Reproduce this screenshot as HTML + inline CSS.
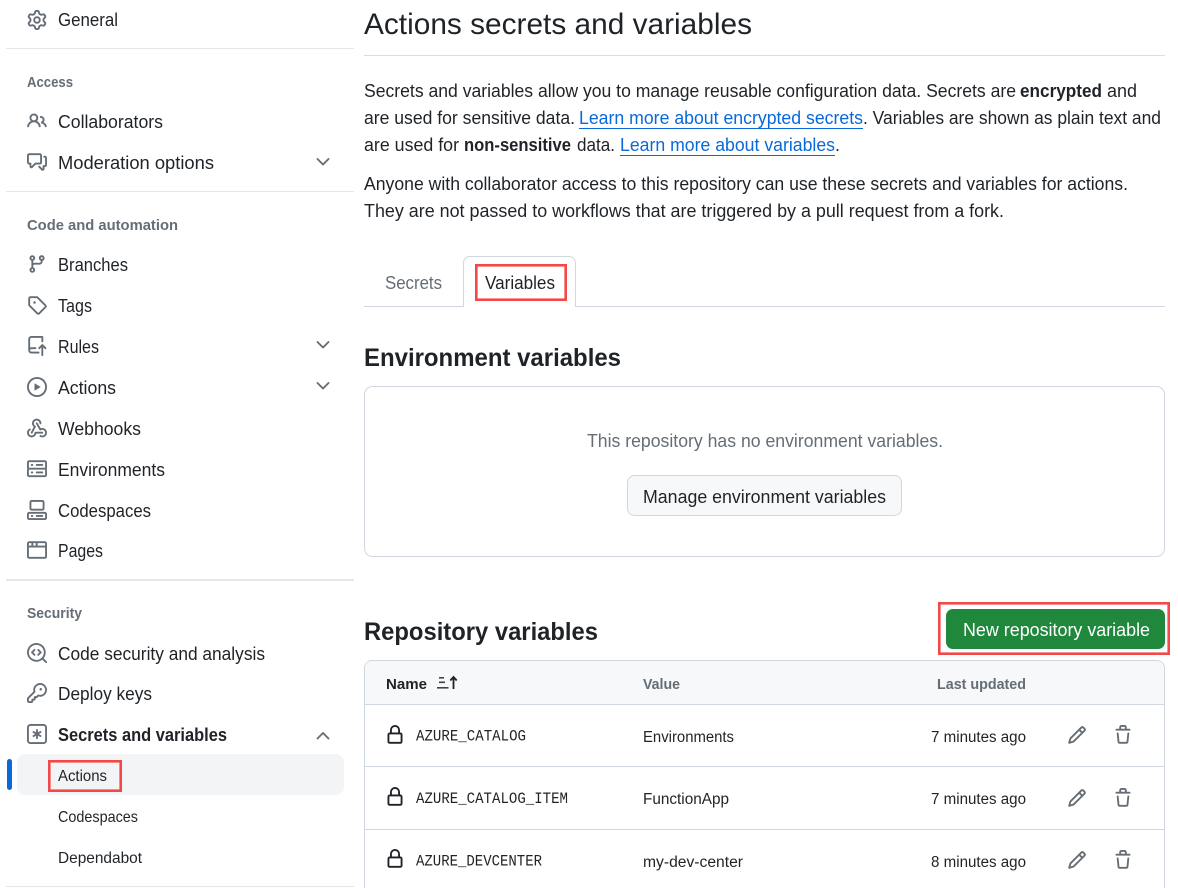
<!DOCTYPE html>
<html lang="en">
<head>
<meta charset="utf-8">
<title>Actions secrets and variables</title>
<style>
html,body{margin:0;padding:0;background:#fff;width:1178px;height:888px;overflow:hidden}
svg{display:block}
text{font-family:"Liberation Sans",sans-serif;fill:#1f2328;font-size:18px}
.b{font-weight:700}
.h{font-weight:700;font-size:15px;fill:#656d76}
.s{font-size:16px}
.g{fill:#656d76}
.l{fill:#0969da}
.m{font-family:"Liberation Mono",monospace;font-size:15.5px}
.t{font-size:15.5px}
.i{fill:#656d76}
.c{fill:none;stroke:#656d76;stroke-width:1.9;stroke-linecap:round;stroke-linejoin:round}
</style>
</head>
<body>
<svg width="1178" height="888" viewBox="0 0 1178 888" xmlns="http://www.w3.org/2000/svg">
<defs>
<path id="gear" d="M8 0a8.2 8.2 0 0 1 .701.031C9.444.095 9.99.645 10.16 1.29l.288 1.107c.018.066.079.158.212.224.231.114.454.243.668.386.123.082.233.09.299.071l1.103-.303c.644-.176 1.392.021 1.82.63.27.385.506.792.704 1.218.315.675.111 1.422-.364 1.891l-.814.806c-.049.048-.098.147-.088.294.016.257.016.515 0 .772-.01.147.038.246.088.294l.814.806c.475.469.679 1.216.364 1.891a7.977 7.977 0 0 1-.704 1.217c-.428.61-1.176.807-1.82.63l-1.102-.302c-.067-.019-.177-.011-.3.071a5.909 5.909 0 0 1-.668.386c-.133.066-.194.158-.211.224l-.29 1.106c-.168.646-.715 1.196-1.458 1.26a8.006 8.006 0 0 1-1.402 0c-.743-.064-1.289-.614-1.458-1.26l-.289-1.106c-.018-.066-.079-.158-.212-.224a5.738 5.738 0 0 1-.668-.386c-.123-.082-.233-.09-.299-.071l-1.103.303c-.644.176-1.392-.021-1.82-.63a8.12 8.12 0 0 1-.704-1.218c-.315-.675-.111-1.422.363-1.891l.815-.806c.05-.048.098-.147.088-.294a6.214 6.214 0 0 1 0-.772c.01-.147-.038-.246-.088-.294l-.815-.806C.635 6.045.431 5.298.746 4.623a7.92 7.92 0 0 1 .704-1.217c.428-.61 1.176-.807 1.82-.63l1.102.302c.067.019.177.011.3-.071.214-.143.437-.272.668-.386.133-.066.194-.158.211-.224l.29-1.106C6.009.645 6.556.095 7.299.03 7.53.01 7.764 0 8 0Zm-.571 1.525c-.036.003-.108.036-.137.146l-.289 1.105c-.147.561-.549.967-.998 1.189-.173.086-.34.183-.5.29-.417.278-.97.423-1.529.27l-1.103-.303c-.109-.03-.175.016-.195.045-.22.312-.412.644-.573.99-.014.031-.021.11.059.19l.815.806c.411.406.562.957.53 1.456a4.709 4.709 0 0 0 0 .582c.032.499-.119 1.05-.53 1.456l-.815.806c-.081.08-.073.159-.059.19.162.346.353.677.573.989.02.03.085.076.195.046l1.102-.303c.56-.153 1.113-.008 1.53.27.161.107.328.204.501.29.447.222.85.629.997 1.189l.289 1.105c.029.109.101.143.137.146a6.6 6.6 0 0 0 1.142 0c.036-.003.108-.036.137-.146l.289-1.105c.147-.561.549-.967.998-1.189.173-.086.34-.183.5-.29.417-.278.97-.423 1.529-.27l1.103.303c.109.029.175-.016.195-.045.22-.313.411-.644.573-.99.014-.031.021-.11-.059-.19l-.815-.806c-.411-.406-.562-.957-.53-1.456a4.709 4.709 0 0 0 0-.582c-.032-.499.119-1.05.53-1.456l.815-.806c.081-.08.073-.159.059-.19a6.464 6.464 0 0 0-.573-.989c-.02-.03-.085-.076-.195-.046l-1.102.303c-.56.153-1.113.008-1.53-.27a4.44 4.44 0 0 0-.501-.29c-.447-.222-.85-.629-.997-1.189l-.289-1.105c-.029-.11-.101-.143-.137-.146a6.6 6.6 0 0 0-1.142 0ZM11 8a3 3 0 1 1-6 0 3 3 0 0 1 6 0ZM9.5 8a1.5 1.5 0 1 0-3.001.001A1.5 1.5 0 0 0 9.5 8Z"/>
<path id="people" d="M2 5.5a3.5 3.5 0 1 1 5.898 2.549 5.508 5.508 0 0 1 3.034 4.084.75.75 0 1 1-1.482.235 4 4 0 0 0-7.9 0 .75.75 0 0 1-1.482-.236A5.507 5.507 0 0 1 3.102 8.05 3.493 3.493 0 0 1 2 5.5ZM11 4a3.001 3.001 0 0 1 2.22 5.018 5.01 5.01 0 0 1 2.56 3.012.749.749 0 0 1-.885.954.752.752 0 0 1-.549-.514 3.507 3.507 0 0 0-2.522-2.372.75.75 0 0 1-.574-.73v-.352a.75.75 0 0 1 .416-.672A1.5 1.5 0 0 0 11 5.5.75.75 0 0 1 11 4Zm-5.5-.5a2 2 0 1 0-.001 3.999A2 2 0 0 0 5.5 3.5Z"/>
<path id="disc" d="M1.75 1h8.5c.966 0 1.75.784 1.75 1.75v5.5A1.75 1.75 0 0 1 10.25 10H7.061l-2.574 2.573A1.458 1.458 0 0 1 2 11.543V10h-.25A1.75 1.75 0 0 1 0 8.25v-5.5C0 1.784.784 1 1.75 1ZM1.5 2.75v5.5c0 .138.112.25.25.25h1a.75.75 0 0 1 .75.75v2.19l2.72-2.72a.749.749 0 0 1 .53-.22h3.5a.25.25 0 0 0 .25-.25v-5.5a.25.25 0 0 0-.25-.25h-8.5a.25.25 0 0 0-.25.25Zm13 2a.25.25 0 0 0-.25-.25h-.5a.75.75 0 0 1 0-1.5h.5c.966 0 1.75.784 1.75 1.75v5.5A1.75 1.75 0 0 1 14.25 12H14v1.543a1.458 1.458 0 0 1-2.487 1.03L9.22 12.28a.749.749 0 0 1 .326-1.275.749.749 0 0 1 .734.215l2.22 2.22v-2.19a.75.75 0 0 1 .75-.75h1a.25.25 0 0 0 .25-.25Z"/>
<path id="branch" d="M9.5 3.25a2.25 2.25 0 1 1 3 2.122V6A2.5 2.5 0 0 1 10 8.5H6a1 1 0 0 0-1 1v1.128a2.251 2.251 0 1 1-1.5 0V5.372a2.25 2.25 0 1 1 1.5 0v1.836A2.493 2.493 0 0 1 6 7h4a1 1 0 0 0 1-1v-.628A2.25 2.25 0 0 1 9.5 3.25Zm-6 0a.75.75 0 1 0 1.5 0 .75.75 0 0 0-1.5 0Zm8.25-.75a.75.75 0 1 0 0 1.5.75.75 0 0 0 0-1.5ZM4.25 12a.75.75 0 1 0 0 1.5.75.75 0 0 0 0-1.5Z"/>
<path id="tag" d="M1 7.775V2.75C1 1.784 1.784 1 2.75 1h5.025c.464 0 .91.184 1.238.513l6.25 6.25a1.75 1.75 0 0 1 0 2.474l-5.026 5.026a1.75 1.75 0 0 1-2.474 0l-6.25-6.25A1.752 1.752 0 0 1 1 7.775Zm1.5 0c0 .066.026.13.073.177l6.25 6.25a.25.25 0 0 0 .354 0l5.025-5.025a.25.25 0 0 0 0-.354l-6.25-6.25a.25.25 0 0 0-.177-.073H2.75a.25.25 0 0 0-.25.25ZM6 5a1 1 0 1 1 0 2 1 1 0 0 1 0-2Z"/>
<path id="push" d="M1 2.5A2.5 2.5 0 0 1 3.5 0h8.75a.75.75 0 0 1 .75.75v3.5a.75.75 0 0 1-1.5 0V1.5h-8a1 1 0 0 0-1 1v6.708A2.493 2.493 0 0 1 3.5 9h3.25a.75.75 0 0 1 0 1.5H3.5a1 1 0 0 0 0 2h5.75a.75.75 0 0 1 0 1.5H3.5A2.5 2.5 0 0 1 1 11.5Zm13.23 7.79h-.001l-1.224-1.224v6.184a.75.75 0 0 1-1.5 0V9.066L10.28 10.29a.75.75 0 0 1-1.06-1.061l2.505-2.504a.75.75 0 0 1 1.06 0L15.29 9.23a.751.751 0 0 1-.018 1.042.751.751 0 0 1-1.042.018Z"/>
<path id="play" d="M8 0a8 8 0 1 1 0 16A8 8 0 0 1 8 0ZM1.5 8a6.5 6.5 0 1 0 13 0 6.5 6.5 0 0 0-13 0Zm4.879-2.773 4.264 2.559a.25.25 0 0 1 0 .428l-4.264 2.559A.25.25 0 0 1 6 10.559V5.442a.25.25 0 0 1 .379-.215Z"/>
<path id="hook" d="M5.5 4.25a2.25 2.25 0 0 1 4.5 0 .75.75 0 0 0 1.5 0 3.75 3.75 0 1 0-6.14 2.889l-2.272 4.258a.75.75 0 0 0 1.324.706L7 7.25a.75.75 0 0 0-.309-1.016A2.25 2.25 0 0 1 5.5 4.25Z M7.364 3.607a.75.75 0 0 1 1.03.257l2.608 4.349a3.75 3.75 0 1 1-.628 6.785.75.75 0 0 1 .752-1.299 2.25 2.25 0 1 0-.033-3.88.75.75 0 0 1-1.03-.256L7.107 4.636a.75.75 0 0 1 .257-1.03Z M2.9 8.776A.75.75 0 0 1 2.625 9.8 2.25 2.25 0 1 0 6 11.75a.75.75 0 0 1 .75-.751h5.5a.75.75 0 0 1 0 1.5H7.425a3.751 3.751 0 1 1-5.55-3.998.75.75 0 0 1 1.024.274Z"/>
<path id="server" d="M1.75 1h12.5c.966 0 1.75.784 1.75 1.75v4c0 .372-.116.717-.314 1 .198.283.314.628.314 1v4a1.75 1.75 0 0 1-1.75 1.75H1.75A1.75 1.75 0 0 1 0 12.75v-4c0-.358.109-.707.314-1a1.739 1.739 0 0 1-.314-1v-4C0 1.784.784 1 1.75 1ZM1.5 2.75v4c0 .138.112.25.25.25h12.5a.25.25 0 0 0 .25-.25v-4a.25.25 0 0 0-.25-.25H1.75a.25.25 0 0 0-.25.25Zm.25 5.75a.25.25 0 0 0-.25.25v4c0 .138.112.25.25.25h12.5a.25.25 0 0 0 .25-.25v-4a.25.25 0 0 0-.25-.25ZM7 4.75A.75.75 0 0 1 7.75 4h4.5a.75.75 0 0 1 0 1.5h-4.5A.75.75 0 0 1 7 4.75ZM7.75 10h4.5a.75.75 0 0 1 0 1.5h-4.5a.75.75 0 0 1 0-1.5ZM3 4.75A.75.75 0 0 1 3.75 4h.5a.75.75 0 0 1 0 1.5h-.5A.75.75 0 0 1 3 4.75ZM3.75 10h.5a.75.75 0 0 1 0 1.5h-.5a.75.75 0 0 1 0-1.5Z"/>
<path id="cs" d="M0 11.25c0-.966.784-1.75 1.75-1.75h12.5c.966 0 1.75.784 1.75 1.75v3A1.75 1.75 0 0 1 14.25 16H1.75A1.75 1.75 0 0 1 0 14.25Zm2-9.5C2 .784 2.784 0 3.75 0h8.5C13.216 0 14 .784 14 1.75v5a1.75 1.75 0 0 1-1.75 1.75h-8.5A1.75 1.75 0 0 1 2 6.75Zm1.75-.25a.25.25 0 0 0-.25.25v5c0 .138.112.25.25.25h8.5a.25.25 0 0 0 .25-.25v-5a.25.25 0 0 0-.25-.25Zm-2 9.5a.25.25 0 0 0-.25.25v3c0 .138.112.25.25.25h12.5a.25.25 0 0 0 .25-.25v-3a.25.25 0 0 0-.25-.25Z M7 12.75a.75.75 0 0 1 .75-.75h4.5a.75.75 0 0 1 0 1.5h-4.5a.75.75 0 0 1-.75-.75Zm-4 0a.75.75 0 0 1 .75-.75h.5a.75.75 0 0 1 0 1.5h-.5a.75.75 0 0 1-.75-.75Z"/>
<path id="browser" d="M0 2.75C0 1.784.784 1 1.75 1h12.5c.966 0 1.75.784 1.75 1.75v10.5A1.75 1.75 0 0 1 14.25 15H1.75A1.75 1.75 0 0 1 0 13.25ZM14.5 6h-13v7.25c0 .138.112.25.25.25h12.5a.25.25 0 0 0 .25-.25Zm-6-3.5v2h6V2.75a.25.25 0 0 0-.25-.25ZM5 2.5v2h2v-2Zm-3.25 0a.25.25 0 0 0-.25.25V4.5h2v-2Z"/>
<path id="scan" d="M8.47 4.97a.75.75 0 0 0 0 1.06L9.94 7.5 8.47 8.97a.75.75 0 1 0 1.06 1.06l2-2a.75.75 0 0 0 0-1.06l-2-2a.75.75 0 0 0-1.06 0ZM6.53 6.03a.75.75 0 0 0-1.06-1.06l-2 2a.75.75 0 0 0 0 1.06l2 2a.75.75 0 1 0 1.06-1.06L5.06 7.5l1.47-1.47Z M12.246 13.307a7.501 7.501 0 1 1 1.06-1.06l2.474 2.473a.749.749 0 0 1-.326 1.275.749.749 0 0 1-.734-.215ZM1.5 7.5a6.002 6.002 0 0 0 3.608 5.504 6.002 6.002 0 0 0 6.486-1.117.748.748 0 0 1 .292-.293A6 6 0 1 0 1.5 7.5Z"/>
<path id="key" d="M10.5 0a5.499 5.499 0 1 1-1.288 10.848l-.932.932a.749.749 0 0 1-.53.22H7v.75a.749.749 0 0 1-.22.53l-.5.5a.749.749 0 0 1-.53.22H5v.75a.749.749 0 0 1-.22.53l-.5.5a.749.749 0 0 1-.53.22h-2A1.75 1.75 0 0 1 0 14.25v-2c0-.199.079-.389.22-.53l4.932-4.932A5.5 5.5 0 0 1 10.5 0Zm-4 5.5c-.001.431.069.86.205 1.269a.75.75 0 0 1-.181.768L1.5 12.56v1.69c0 .138.112.25.25.25h1.69l.06-.06v-1.19a.75.75 0 0 1 .75-.75h1.19l.06-.06v-1.19a.75.75 0 0 1 .75-.75h1.19l1.023-1.025a.75.75 0 0 1 .768-.18A4 4 0 1 0 6.5 5.5ZM11 6a1 1 0 1 1 0-2 1 1 0 0 1 0 2Z"/>
<path id="ast" d="M0 2.75A2.75 2.75 0 0 1 2.75 0h10.5A2.75 2.75 0 0 1 16 2.75v10.5A2.75 2.75 0 0 1 13.25 16H2.75A2.75 2.75 0 0 1 0 13.25ZM2.75 1.5c-.69 0-1.25.56-1.25 1.25v10.5c0 .69.56 1.25 1.25 1.25h10.5c.69 0 1.25-.56 1.25-1.25V2.75c0-.69-.56-1.25-1.25-1.25Z M8 4a.75.75 0 0 1 .75.75V6.7l1.69-.975a.75.75 0 0 1 .75 1.3L9.5 8l1.69.976a.75.75 0 0 1-.75 1.298L8.75 9.3v1.951a.75.75 0 0 1-1.5 0V9.299l-1.69.976a.75.75 0 0 1-.75-1.3L6.5 8l-1.69-.975a.75.75 0 0 1 .75-1.3l1.69.976V4.75A.75.75 0 0 1 8 4Z"/>
<path id="lock" d="M4 4a4 4 0 0 1 8 0v2h.25c.966 0 1.75.784 1.75 1.75v5.5A1.75 1.75 0 0 1 12.25 15h-8.5A1.75 1.75 0 0 1 2 13.25v-5.5C2 6.784 2.784 6 3.75 6H4Zm8.25 3.5h-8.5a.25.25 0 0 0-.25.25v5.5c0 .138.112.25.25.25h8.5a.25.25 0 0 0 .25-.25v-5.5a.25.25 0 0 0-.25-.25ZM10.5 6V4a2.5 2.5 0 1 0-5 0v2Z"/>
<path id="pencil" d="M11.013 1.427a1.75 1.75 0 0 1 2.474 0l1.086 1.086a1.75 1.75 0 0 1 0 2.474l-8.61 8.61c-.21.21-.47.364-.756.445l-3.251.93a.75.75 0 0 1-.927-.928l.929-3.25c.081-.286.235-.547.445-.758l8.61-8.61Zm.176 4.823L9.75 4.81l-6.286 6.287a.253.253 0 0 0-.064.108l-.558 1.953 1.953-.558a.253.253 0 0 0 .108-.064Zm1.238-3.763a.25.25 0 0 0-.354 0L10.811 3.75l1.439 1.44 1.263-1.263a.25.25 0 0 0 0-.354Z"/>
<path id="trash" d="M11 1.75V3h2.25a.75.75 0 0 1 0 1.5H2.75a.75.75 0 0 1 0-1.5H5V1.75C5 .784 5.784 0 6.75 0h2.5C10.216 0 11 .784 11 1.75ZM4.496 6.675l.66 6.6a.25.25 0 0 0 .249.225h5.19a.25.25 0 0 0 .249-.225l.66-6.6a.75.75 0 0 1 1.492.149l-.66 6.6A1.748 1.748 0 0 1 10.595 15h-5.19a1.75 1.75 0 0 1-1.741-1.575l-.66-6.6a.75.75 0 1 1 1.492-.15ZM6.5 1.75V3h3V1.75a.25.25 0 0 0-.25-.25h-2.5a.25.25 0 0 0-.25.25Z"/>
</defs>

<!-- Sidebar -->
<rect x="6" y="48" width="348" height="1" fill="#e4e8ec"/>
<rect x="6" y="191" width="348" height="1" fill="#e4e8ec"/>
<rect x="6" y="579" width="348" height="2" fill="#e4e8ec"/>
<rect x="6" y="886" width="348" height="1" fill="#e4e8ec"/>
<rect x="17" y="754" width="327" height="41" rx="8" fill="#f3f4f6"/>
<rect x="7" y="759" width="5" height="31" rx="2.5" fill="#0969da"/>

<g class="i">
<use href="#gear" transform="translate(27 10) scale(1.25)"/>
<use href="#people" transform="translate(27 111) scale(1.25)"/>
<use href="#disc" transform="translate(27 152) scale(1.25)"/>
<use href="#branch" transform="translate(27 254) scale(1.25)"/>
<use href="#tag" transform="translate(27 295) scale(1.25)"/>
<use href="#push" transform="translate(27 336) scale(1.25)"/>
<use href="#play" transform="translate(27 377) scale(1.25)"/>
<use href="#hook" transform="translate(27 418) scale(1.25)"/>
<use href="#server" transform="translate(27 459) scale(1.25)"/>
<use href="#cs" transform="translate(27 500) scale(1.25)"/>
<use href="#browser" transform="translate(27 540) scale(1.25)"/>
<use href="#scan" transform="translate(27 643) scale(1.25)"/>
<use href="#key" transform="translate(27 683) scale(1.25)"/>
<use href="#ast" transform="translate(27 724) scale(1.25)"/>
</g>
<polyline class="c" points="317.5,159 323,164.5 328.5,159"/>
<polyline class="c" points="317.5,342 323,347.5 328.5,342"/>
<polyline class="c" points="317.5,383 323,388.5 328.5,383"/>
<polyline class="c" points="317.5,738.5 323,733 328.5,738.5"/>

<text x="58" y="26" textLength="60" lengthAdjust="spacingAndGlyphs">General</text>
<text class="h" x="27" y="87" textLength="46" lengthAdjust="spacingAndGlyphs">Access</text>
<text x="58" y="128" textLength="105" lengthAdjust="spacingAndGlyphs">Collaborators</text>
<text x="58" y="169" textLength="156" lengthAdjust="spacingAndGlyphs">Moderation options</text>
<text class="h" x="27" y="230" textLength="151" lengthAdjust="spacingAndGlyphs">Code and automation</text>
<text x="58" y="271" textLength="70" lengthAdjust="spacingAndGlyphs">Branches</text>
<text x="58" y="312" textLength="34" lengthAdjust="spacingAndGlyphs">Tags</text>
<text x="58" y="353" textLength="41" lengthAdjust="spacingAndGlyphs">Rules</text>
<text x="58" y="394" textLength="58" lengthAdjust="spacingAndGlyphs">Actions</text>
<text x="58" y="435" textLength="83" lengthAdjust="spacingAndGlyphs">Webhooks</text>
<text x="58" y="476" textLength="107" lengthAdjust="spacingAndGlyphs">Environments</text>
<text x="58" y="517" textLength="93" lengthAdjust="spacingAndGlyphs">Codespaces</text>
<text x="58" y="557" textLength="45" lengthAdjust="spacingAndGlyphs">Pages</text>
<text class="h" x="27" y="618" textLength="55" lengthAdjust="spacingAndGlyphs">Security</text>
<text x="58" y="660" textLength="207" lengthAdjust="spacingAndGlyphs">Code security and analysis</text>
<text x="58" y="700" textLength="94" lengthAdjust="spacingAndGlyphs">Deploy keys</text>
<text class="b" x="58" y="741" textLength="169" lengthAdjust="spacingAndGlyphs">Secrets and variables</text>
<text class="s" x="58" y="781" textLength="49" lengthAdjust="spacingAndGlyphs">Actions</text>
<text class="s" x="58" y="822" textLength="80" lengthAdjust="spacingAndGlyphs">Codespaces</text>
<text class="s" x="58" y="863" textLength="84" lengthAdjust="spacingAndGlyphs">Dependabot</text>
<rect x="49.3" y="761.3" width="71.4" height="29.4" fill="none" stroke="#f34848" stroke-width="2.6"/>

<!-- Header -->
<text x="364" y="34" style="font-size:30px" textLength="388" lengthAdjust="spacingAndGlyphs">Actions secrets and variables</text>
<rect x="364" y="55" width="801" height="1" fill="#d8dee4"/>

<!-- Paragraphs -->
<text x="364" y="97" textLength="652" lengthAdjust="spacingAndGlyphs">Secrets and variables allow you to manage reusable configuration data. Secrets are</text>
<text class="b" x="1020" y="97" textLength="82" lengthAdjust="spacingAndGlyphs">encrypted</text>
<text x="1107" y="97" textLength="30" lengthAdjust="spacingAndGlyphs">and</text>
<text x="364" y="124" textLength="211" lengthAdjust="spacingAndGlyphs">are used for sensitive data.</text>
<text class="l" x="579" y="124" textLength="284" lengthAdjust="spacingAndGlyphs">Learn more about encrypted secrets</text>
<rect x="579" y="128" width="284" height="1" fill="#0969da"/>
<text x="863" y="124" textLength="298" lengthAdjust="spacingAndGlyphs">. Variables are shown as plain text and</text>
<text x="364" y="151" textLength="95" lengthAdjust="spacingAndGlyphs">are used for</text>
<text class="b" x="464" y="151" textLength="107" lengthAdjust="spacingAndGlyphs">non-sensitive</text>
<text x="577" y="151" textLength="38" lengthAdjust="spacingAndGlyphs">data.</text>
<text class="l" x="620" y="151" textLength="215" lengthAdjust="spacingAndGlyphs">Learn more about variables</text>
<rect x="620" y="155" width="215" height="1" fill="#0969da"/>
<text x="835" y="151">.</text>
<text x="364" y="190" textLength="764" lengthAdjust="spacingAndGlyphs">Anyone with collaborator access to this repository can use these secrets and variables for actions.</text>
<text x="364" y="217" textLength="640" lengthAdjust="spacingAndGlyphs">They are not passed to workflows that are triggered by a pull request from a fork.</text>

<!-- Tabs -->
<rect x="364" y="306" width="801" height="1" fill="#d0d7de"/>
<path d="M463.5 307V263a6.5 6.5 0 0 1 6.5-6.5h99a6.5 6.5 0 0 1 6.5 6.5v44" fill="#fff" stroke="#d0d7de"/>
<rect x="464" y="305" width="111" height="2" fill="#fff"/>
<text class="g" x="385" y="289" textLength="57" lengthAdjust="spacingAndGlyphs">Secrets</text>
<text x="485" y="289" textLength="70" lengthAdjust="spacingAndGlyphs">Variables</text>
<rect x="476.3" y="265.3" width="89.4" height="34.4" fill="none" stroke="#f34848" stroke-width="2.6"/>

<!-- Environment variables -->
<text class="b" x="364" y="366" style="font-size:25px" textLength="257" lengthAdjust="spacingAndGlyphs">Environment variables</text>
<rect x="364.5" y="386.5" width="800" height="170" rx="8" fill="#fff" stroke="#d0d7de"/>
<text class="g" x="587" y="447" textLength="356" lengthAdjust="spacingAndGlyphs">This repository has no environment variables.</text>
<rect x="627.5" y="475.5" width="274" height="40" rx="7" fill="#f6f8fa" stroke="#d0d7de"/>
<text x="643" y="503" textLength="243" lengthAdjust="spacingAndGlyphs">Manage environment variables</text>

<!-- Repository variables -->
<text class="b" x="364" y="640" style="font-size:25px" textLength="234" lengthAdjust="spacingAndGlyphs">Repository variables</text>
<rect x="946" y="609" width="219" height="40" rx="7" fill="#1f883d"/>
<text x="963" y="636" style="fill:#fff" textLength="187" lengthAdjust="spacingAndGlyphs">New repository variable</text>
<rect x="939.3" y="603.3" width="229.4" height="50.4" fill="none" stroke="#f34848" stroke-width="2.6"/>

<!-- Table -->
<path d="M364.5 890V668a7.5 7.5 0 0 1 7.5-7.5h785a7.5 7.5 0 0 1 7.5 7.5v222" fill="#fff" stroke="#d0d7de"/>
<path d="M365 704V668a7 7 0 0 1 7-7h785a7 7 0 0 1 7 7v36Z" fill="#f6f8fa"/>
<rect x="364" y="704" width="801" height="1" fill="#d0d7de"/>
<rect x="364" y="766" width="801" height="1" fill="#d0d7de"/>
<rect x="364" y="829" width="801" height="1" fill="#d0d7de"/>

<text class="b" x="386" y="689" textLength="41" lengthAdjust="spacingAndGlyphs" style="font-size:15px">Name</text>
<g fill="#3d444d">
<rect x="439" y="677" width="5" height="1.6"/>
<rect x="439" y="681.5" width="6" height="1.6"/>
<rect x="437" y="687" width="11.5" height="1.6"/>
</g>
<path d="M453.5 689V677.5M450.3 680.5L453.5 677L456.7 680.5" fill="none" stroke="#1f2328" stroke-width="1.8"/>
<text class="g b" x="643" y="689" textLength="37" lengthAdjust="spacingAndGlyphs" style="font-size:15px">Value</text>
<text class="g b" x="937" y="689" textLength="89" lengthAdjust="spacingAndGlyphs" style="font-size:15px">Last updated</text>

<use href="#lock" transform="translate(385 725) scale(1.25)" fill="#1f2328"/>
<text class="m" x="416" y="740.5" textLength="110" lengthAdjust="spacingAndGlyphs">AZURE_CATALOG</text>
<text class="t" x="643" y="742" textLength="91" lengthAdjust="spacingAndGlyphs">Environments</text>
<text class="t" x="931" y="742" textLength="95" lengthAdjust="spacingAndGlyphs">7 minutes ago</text>
<use href="#pencil" class="i" transform="translate(1067 725) scale(1.25)"/>
<use href="#trash" class="i" transform="translate(1113 725) scale(1.25)"/>

<use href="#lock" transform="translate(385 787) scale(1.25)" fill="#1f2328"/>
<text class="m" x="416" y="803" textLength="152" lengthAdjust="spacingAndGlyphs">AZURE_CATALOG_ITEM</text>
<text class="t" x="643" y="804" textLength="86" lengthAdjust="spacingAndGlyphs">FunctionApp</text>
<text class="t" x="931" y="804" textLength="95" lengthAdjust="spacingAndGlyphs">7 minutes ago</text>
<use href="#pencil" class="i" transform="translate(1067 788) scale(1.25)"/>
<use href="#trash" class="i" transform="translate(1113 788) scale(1.25)"/>

<use href="#lock" transform="translate(385 849) scale(1.25)" fill="#1f2328"/>
<text class="m" x="416" y="865.5" textLength="126" lengthAdjust="spacingAndGlyphs">AZURE_DEVCENTER</text>
<text class="t" x="643" y="867" textLength="100" lengthAdjust="spacingAndGlyphs">my-dev-center</text>
<text class="t" x="931" y="867" textLength="95" lengthAdjust="spacingAndGlyphs">8 minutes ago</text>
<use href="#pencil" class="i" transform="translate(1067 850) scale(1.25)"/>
<use href="#trash" class="i" transform="translate(1113 850) scale(1.25)"/>
</svg>
</body>
</html>
